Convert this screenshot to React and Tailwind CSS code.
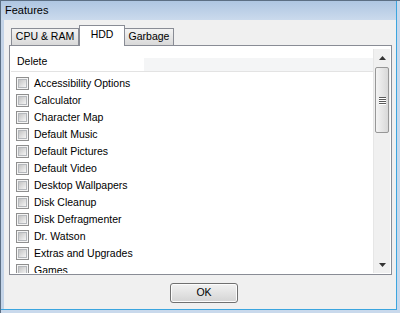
import React from 'react';

const items = [
    'Accessibility Options',
    'Calculator',
    'Character Map',
    'Default Music',
    'Default Pictures',
    'Default Video',
    'Desktop Wallpapers',
    'Disk Cleanup',
    'Disk Defragmenter',
    'Dr. Watson',
    'Extras and Upgrades',
    'Games',
];

const font = { fontFamily: '"Liberation Sans", Arial, sans-serif' };

const CheckBox = () => (
    <div className="w-[13px] h-[13px] shrink-0 border border-[#8f8f8f] bg-[#f4f4f4] p-[1px]">
        <div className="w-full h-full border border-[#b5b8bc] bg-gradient-to-br from-[#c4c4c4] to-[#f5f5f5]" />
    </div>
);

const ScrollBar = () => (
    <div className="w-[17px] shrink-0 flex flex-col bg-[#f0f0f0] border-l border-[#e6e6e6]">
        {/* Up arrow */}
        <div className="h-[17px] flex items-center justify-center">
            <svg width="7" height="4" viewBox="0 0 7 4">
                <polygon points="3.5,0 7,4 0,4" fill="#333" />
            </svg>
        </div>
        {/* Thumb */}
        <div className="mt-[1px] ml-[1px] mr-[1px] h-[66px] rounded-[2px] border border-[#979797] bg-gradient-to-r from-[#f4f4f4] to-[#d9d9d9] flex flex-col items-center justify-center gap-[1px]">
            {[0, 1, 2, 3].map((i) => (
                <div key={i} className="w-[7px] h-[1px] bg-[#5a5a5a] shadow-[0_1px_0_#ffffff]" />
            ))}
        </div>
        <div className="flex-1" />
        {/* Down arrow */}
        <div className="h-[17px] flex items-center justify-center">
            <svg width="7" height="4" viewBox="0 0 7 4">
                <polygon points="0,0 7,0 3.5,4" fill="#333" />
            </svg>
        </div>
    </div>
);

const App = () => {
    return (
        <div className="w-[400px] h-[313px] bg-[#c9d9ec] border-t border-l border-[#5c6f84] pr-[3px] pb-[3px] overflow-hidden" style={font}>
            <div className="w-full h-full flex flex-col bg-[#c4d4e8] border-r border-b border-[#3ba5df]">
                {/* Title bar */}
                <div className="h-[19px] shrink-0 flex items-center pl-[4px] bg-gradient-to-b from-[#aec6e2] to-[#cbdaec] text-[11px] text-black">
                    Features
                </div>

                {/* Body */}
                <div className="flex-1 pl-[3px] flex">
                    <div className="flex-1 bg-[#f0f0f0] flex flex-col">
                        {/* Tabs */}
                        <div className="relative z-10 h-[25px] ml-[5px] pl-[2px] flex items-end text-[10.5px] text-black">
                            <div className="w-[68px] h-[17px] flex items-center justify-center border-t border-l border-r border-[#898c95] bg-gradient-to-b from-[#f3f3f3] to-[#d9d9d9]">
                                CPU &amp; RAM
                            </div>
                            <div className="w-[46px] h-[21px] -mb-[1px] pb-[3px] flex items-center justify-center border-t border-l border-r border-[#898c95] bg-white">
                                HDD
                            </div>
                            <div className="w-[49px] h-[17px] flex items-center justify-center border-t border-r border-[#898c95] bg-gradient-to-b from-[#f3f3f3] to-[#d9d9d9]">
                                Garbage
                            </div>
                        </div>

                        {/* Tab panel */}
                        <div className="ml-[5px] mr-[4px] h-[230px] border border-[#898c95] bg-white pt-[3px] px-[1px] pb-[1px] flex">
                            <div className="flex-1 flex flex-col overflow-hidden">
                                {/* Column header */}
                                <div className="h-[23px] shrink-0 flex border-b border-[#e3e3e3] text-[10.5px] text-black">
                                    <div className="w-[133px] flex items-center pl-[6px] pt-[3px] bg-white">Delete</div>
                                    <div className="flex-1 flex flex-col">
                                        <div className="h-[9px] bg-white" />
                                        <div className="flex-1 bg-[#f4f5f6]" />
                                    </div>
                                </div>
                                {/* Rows */}
                                <div className="flex-1 overflow-hidden pt-[3px]">
                                    {items.map((item) => (
                                        <div key={item} className="h-[17px] flex items-center gap-[5px] pl-[5px] text-[10.5px] text-black">
                                            <CheckBox />
                                            <span className="whitespace-nowrap">{item}</span>
                                        </div>
                                    ))}
                                </div>
                            </div>
                            <ScrollBar />
                        </div>

                        {/* Footer */}
                        <div className="mt-[8px] pl-[8px] flex justify-center">
                            <button className="w-[68px] h-[20px] rounded-[3px] border border-[#707070] bg-gradient-to-b from-[#f2f2f2] to-[#d4d4d4] shadow-[inset_0_0_0_1px_#fcfcfc] text-[10.5px] text-black flex items-center justify-center">
                                OK
                            </button>
                        </div>
                    </div>
                </div>
            </div>
        </div>
    );
};

export default App;
